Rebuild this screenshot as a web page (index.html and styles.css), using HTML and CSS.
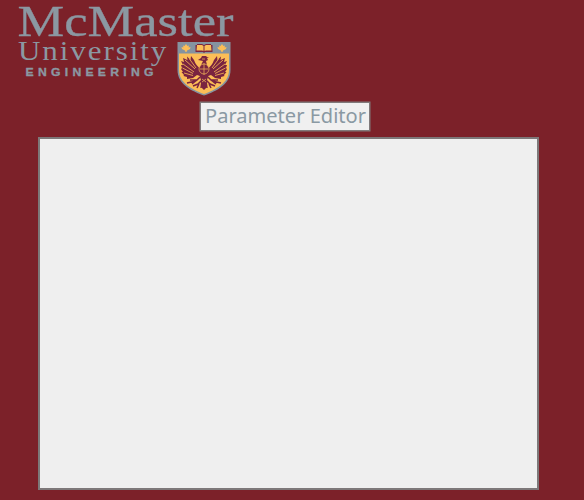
FILE: index.html
```html
<!DOCTYPE html>
<html lang="en">
<head>
<meta charset="utf-8">
<title>Parameter Editor</title>
<link rel="stylesheet" href="styles.css">
</head>
<body>
<header class="brand">
<svg class="logo" viewBox="0 0 250 101" role="img" aria-label="McMaster University Engineering">
  <text class="name" x="17.500" y="35.500" textLength="216" lengthAdjust="spacingAndGlyphs">McMaster</text>
  <text class="university" transform="translate(18 60) scale(1.15 1)" x="0" y="0" textLength="129" lengthAdjust="spacing">University</text>
  <text class="faculty" transform="translate(25.5 76) scale(1.22 1)" x="0" y="0" textLength="105" lengthAdjust="spacing">ENGINEERING</text>
  <g transform="translate(177 41)">
    <path class="steel" d="M.5 1H53.5V29C53.5 43 40 50 27 54.5C14 50 .5 43 .5 29Z"/>
    <path class="gold" d="M2 12.500H52V29C52 42 39 48.5 27 53C15 48.5 2 42 2 29Z"/>
    <path id="leaf" class="gold" d="M9 3L10.5 5L12 4.5L11.5 6.5L13.5 6L13 8L10 9.5L9.5 11H8.5L8 9.5L5 8L4.500 6L6.500 6.500L6 4.500L7.500 5Z"/>
    <use href="#leaf" x="36"/>
    <path class="maroon" d="M18.500 4H20V3H25L27 4L29 3H34V4H35.500V11H28L27 12L26 11H18.500Z"/>
    <path class="gold" d="M20 4H25L26.500 5V10L25 9.500H19.500ZM27.500 5L29 4H34L34.500 9.500H29L27.500 10Z"/>
    <g id="wing">
      <path class="maroon" d="M24 28Q19 25 17 19L14 15L13.500 19L10 15.500L10.500 19L6 17L7 21L4 20L6 24L4 24L5 27L4 28L6 31L4.500 31L7 34L6.500 35L10 36L10 38L16 37L20 34L23 35Z"/>
      <path class="feather" d="M8 19L18 28M6 23L17 31M5.500 27L16 32.500M7 32L16 34.500M12.500 18L19 27"/>
      <path class="claw" d="M23 36L20 39L13 39M20 39L15 43M19 40L10 42M25 39L21 43L16 45M22 43L20 47M25 40L24 47"/>
    </g>
    <use href="#wing" transform="translate(54 0) scale(-1 1)"/>
    <path class="maroon" d="M24 24L26 20L21 19L24 17L25 15H30L29 16L32 16L30 17L31 19L29 20L30 24L32.500 28L31 36L29 42L30 46L27 49L24 46L25 42L23 36L21.500 28Z"/>
    <path class="detail" d="M27 22V34M23 28H31M27 23A5 5 0 0 1 27 33A5 5 0 0 1 27 23M25 18L28 18M25 38L29 41M29 38L25 41"/>
  </g>
</svg>
</header>
<main class="editor">
  <h1 class="title"><svg class="caption" viewBox="0 0 168 27"><text x="4" y="20" textLength="161" lengthAdjust="spacingAndGlyphs">Parameter Editor</text></svg></h1>
  <section class="panel"></section>
</main>
</body>
</html>
```

FILE: styles.css
```css
* { box-sizing: border-box; }
body {
  margin: 0;
  height: 500px;
  background: #7c2129;
  display: flex;
  flex-direction: column;
  overflow: hidden;
}
.brand { height: 102px; }
.logo { display: block; width: 250px; height: 101px; }
.name, .university { font-family: "Liberation Serif", serif; fill: #8b98a2; }
.name { font-size: 44px; stroke: #8b98a2; stroke-width: .3; }
.university { font-size: 27px; }
.faculty { font: bold 10px "Liberation Sans", sans-serif; fill: #8b98a2; stroke: #8b98a2; stroke-width: .3; }
.steel { fill: #8593a0; }
.gold { fill: #fcbe57; }
.maroon { fill: #7a2440; }
.feather { fill: none; stroke: #fcbe57; stroke-width: .8; }
.claw { fill: none; stroke: #7a2440; stroke-width: 1.5; }
.detail { fill: none; stroke: #e9a957; stroke-width: .8; }
.editor {
  width: 501px;
  margin-left: 38px;
  display: flex;
  flex-direction: column;
}
.title {
  margin: 0 0 6px 162px;
  width: 170px;
  height: 29px;
  border: 1px solid #807a7b;
  box-shadow: 0 0 0 .5px #807a7b;
  background: #f0f0f0;
}
.caption {
  display: block;
  width: 168px;
  height: 27px;
  font: 400 20px "Noto Sans", sans-serif;
  fill: #8a99a3;
}
.panel { height: 353px; border: 2px solid #7d7879; background: #efefef; }
```
